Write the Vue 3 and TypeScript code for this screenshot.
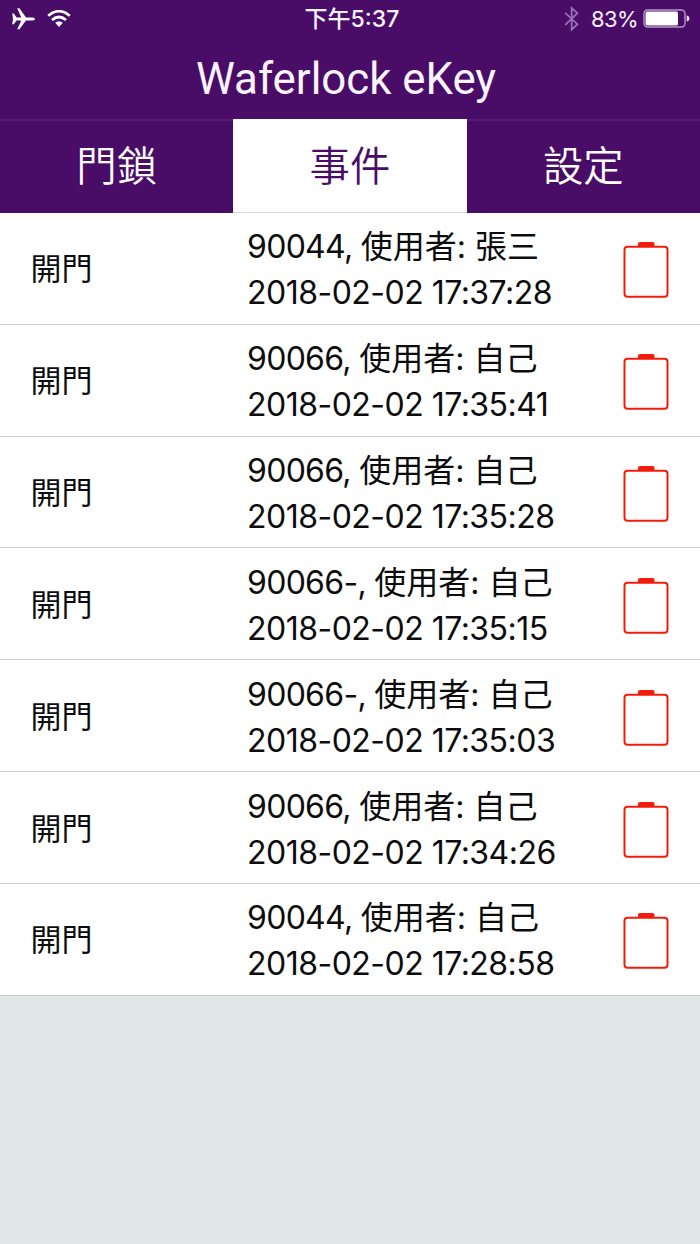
<script setup lang="ts">
interface LockEvent {
  action: string
  device: string
  user: string
  time: string
}

const tabs: string[] = ['門鎖', '事件', '設定']
const activeTab = 1

const events: LockEvent[] = [
  { action: '開門', device: '90044', user: '張三', time: '2018-02-02 17:37:28' },
  { action: '開門', device: '90066', user: '自己', time: '2018-02-02 17:35:41' },
  { action: '開門', device: '90066', user: '自己', time: '2018-02-02 17:35:28' },
  { action: '開門', device: '90066-', user: '自己', time: '2018-02-02 17:35:15' },
  { action: '開門', device: '90066-', user: '自己', time: '2018-02-02 17:35:03' },
  { action: '開門', device: '90066', user: '自己', time: '2018-02-02 17:34:26' },
  { action: '開門', device: '90044', user: '自己', time: '2018-02-02 17:28:58' },
]
</script>

<template>
  <div class="screen">
    <header class="header">
      <div class="status">
        <div class="side">
          <svg class="plane" width="24" height="22" viewBox="0 0 24 22">
            <path d="M0.2 5.4H1.8L4.6 9.4H9.3L5.2 0.2H7.4L14 9.4H20.5Q23 9.6 23 11Q23 12.4 20.5 12.6H14L7.4 21.2H5.2L9.3 12.6H4.6L1.8 16.2H0.2L1 11Z" fill="#fff" />
          </svg>
          <svg class="wifi" width="24" height="18" viewBox="0 0 24 18">
            <path d="M1.2 5.8Q12 -3.4 22.8 5.8M5 10Q12 4 19 10" fill="none" stroke="#fff" stroke-width="2.7" />
            <path d="M8.2 12.8Q12 9.8 15.8 12.8L12 17Z" fill="#fff" />
          </svg>
        </div>
        <div class="clock">下午5:37</div>
        <div class="side right">
          <svg class="bluetooth" width="16" height="26" viewBox="0 0 16 26">
            <path d="M1.2 6.8L13.4 18.2L7.7 23.6V2L13.4 7.2L1.2 18.8" fill="none" stroke="#9a70b4" stroke-width="1.8" />
          </svg>
          <span class="percent">83%</span>
          <svg class="charge" width="47" height="20" viewBox="0 0 47 20">
            <rect x="1" y="1" width="41" height="17" rx="3.5" fill="none" stroke="#b796cb" stroke-width="1.4" />
            <rect x="2.5" y="2.5" width="32.5" height="14" rx="1.5" fill="#fff" />
            <path d="M43.7 6.3Q46.5 7.2 46.5 9.5Q46.5 11.8 43.7 12.7Z" fill="#eadff0" />
          </svg>
        </div>
      </div>
      <h1 class="title">Waferlock eKey</h1>
    </header>
    <nav class="tabs">
      <button v-for="(tab, i) in tabs" :key="tab" class="tab" :class="{ active: i === activeTab }">
        <span>{{ tab }}</span>
      </button>
    </nav>
    <main>
      <article v-for="event in events" :key="event.time" class="row">
        <div class="action">{{ event.action }}</div>
        <div class="details">
          <div class="who"><span class="device">{{ event.device }}, </span>使用者: {{ event.user }}</div>
          <div class="time">{{ event.time }}</div>
        </div>
        <svg class="battery" width="46" height="58" viewBox="0 0 46 58">
          <path d="M15 5V3Q15 1 17 1H29.5Q31.5 1 31.5 3V5Z" fill="#f01c0c" />
          <rect x="1.5" y="5.8" width="43" height="50" rx="3" fill="none" stroke="#f01c0c" stroke-width="2" />
        </svg>
      </article>
    </main>
  </div>
</template>

<style>
body {
  margin: 0;
  background: #e1e7e7;
}
</style>

<style scoped>
.screen {
  width: 700px;
  height: 1244px;
  overflow: hidden;
  background: #e1e7e7;
  font-family: Inter, "Noto Sans CJK TC", sans-serif;
  color: #0c0c0c;
}
.header {
  box-sizing: border-box;
  height: 119px;
  background: #490d67;
  color: #fbf3fe;
}
.status {
  display: grid;
  grid-template-columns: 1fr auto 1fr;
  align-items: center;
  height: 38px;
}
.side {
  display: flex;
  align-items: center;
  padding-left: 12px;
}
.plane {
  display: block;
}
.wifi {
  margin-left: 11px;
}
.right {
  justify-content: flex-end;
  padding: 0 10px 0 0;
}
.clock {
  font-size: 23px;
  font-weight: 500;
  line-height: 38px;
  padding-left: 4px;
}
.percent {
  margin-left: 11px;
  margin-right: -1px;
  font-size: 22px;
  letter-spacing: -0.6px;
  line-height: 38px;
}
.charge {
  margin-left: 6px;
}
.title {
  margin: 0;
  text-align: center;
  padding-right: 8px;
  font-family: Roboto, sans-serif;
  font-size: 43.8px;
  font-weight: 400;
  line-height: 82px;
}
.tabs {
  display: grid;
  grid-template-columns: repeat(3, 1fr);
  height: 94px;
}
.tab {
  margin: 0;
  padding: 0 0 7px;
  border: 0;
  border-top: 2px solid #561974;
  background: #490d67;
  color: #fff;
  font: 350 40.4px/60px "Noto Sans CJK TC", sans-serif;
}
.tab.active {
  border-top-color: #fff;
  border-bottom: 1px solid #d8d8d8;
  padding-bottom: 6px;
  background: #fff;
  color: #490d67;
}
.row {
  box-sizing: border-box;
  display: grid;
  grid-template-columns: 247px 376px 46px;
  align-items: center;
  height: 111.83px;
  padding-top: 4px;
  border-bottom: 1px solid #cbcdcd;
  background: #fff;
}
.action {
  padding: 0 0 2px 30.5px;
  font-size: 31px;
  line-height: 46px;
}
.details {
  font-size: 32px;
  line-height: 46px;
  white-space: nowrap;
}
.device {
  letter-spacing: -0.7px;
}
.time {
  letter-spacing: -0.52px;
}
.battery {
  display: block;
}
</style>
